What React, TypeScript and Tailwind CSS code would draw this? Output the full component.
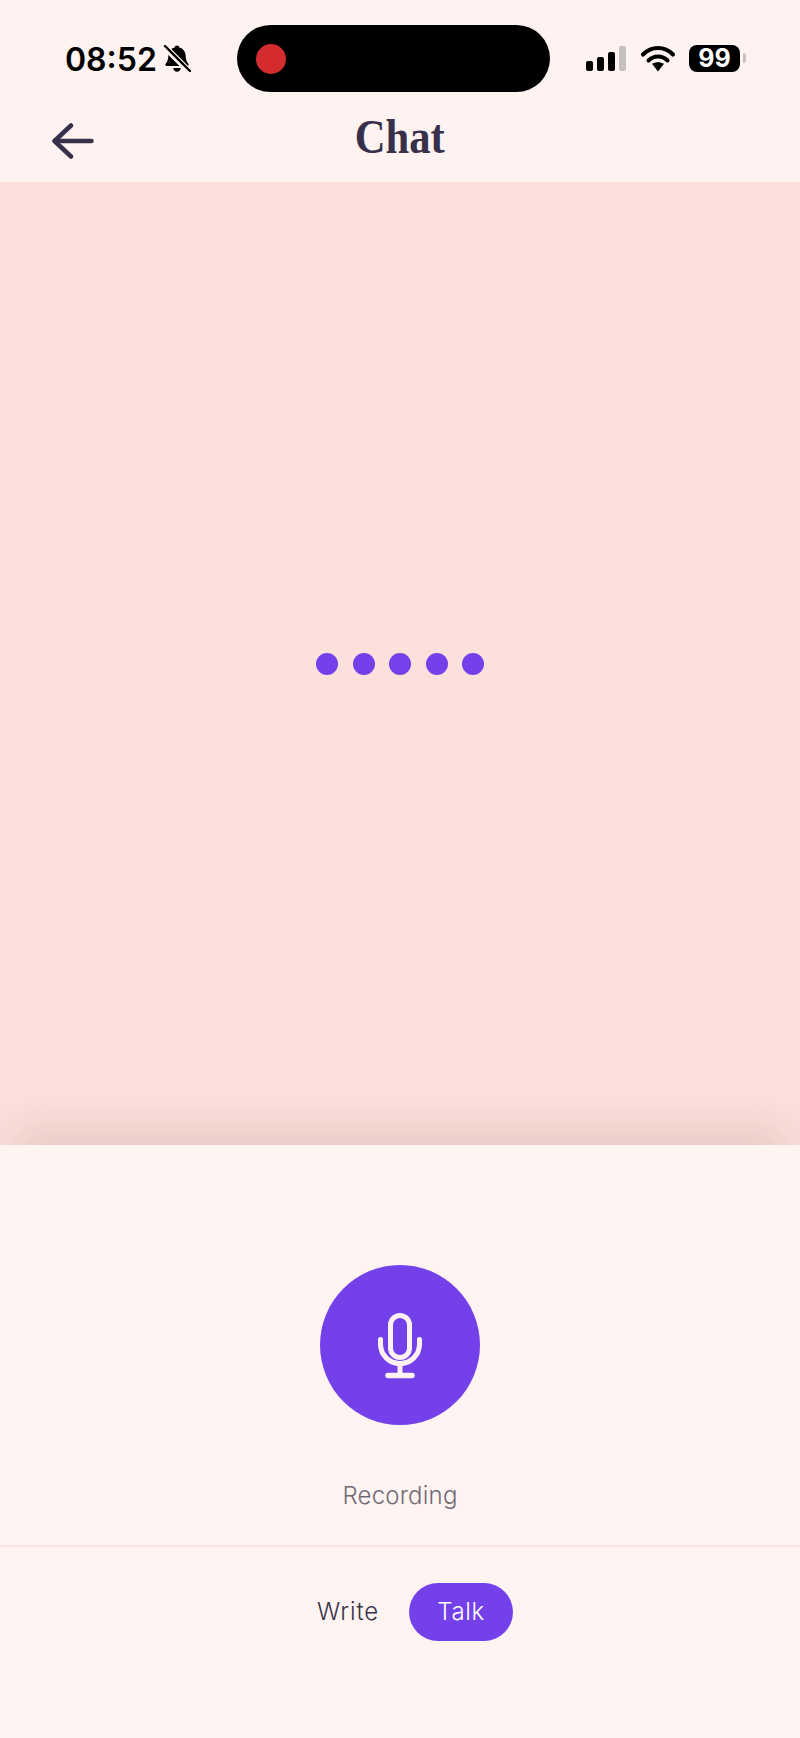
function BellMute() {
  return (
    <svg width="28" height="28" viewBox="0 0 28 28" fill="none" className="-mt-[2px]">
      <path d="M14 .5c1.300 0 2.200.9 2.400 2 3.800 1 6 4 6.200 8 .2 4 1 6.300 2.600 8.100 1 1.100.5 2.400-1 2.400H3.800c-1.500 0-2-1.300-1-2.400C4.400 16.800 5.200 14.500 5.400 10.500c.2-4 2.400-7 6.200-8C11.800 1.400 12.700.5 14 .5z" fill="#000" />
      <path d="M10.200 23h7.600c-.3 2.200-1.800 3.700-3.800 3.700s-3.500-1.500-3.800-3.700z" fill="#000" />
      <path d="M0 2.500 25 27.500" stroke="#fff3f1" strokeWidth="3" />
      <path d="M3 0.500 27.500 25" stroke="#fff3f1" strokeWidth="2.500" />
      <path d="M2 1 27 26" stroke="#000" strokeWidth="2.400" strokeLinecap="round" />
    </svg>
  );
}

function Signal() {
  return (
    <div className="flex items-end gap-[4px] h-[25px] mt-[21px]">
      <div className="w-[7px] h-[10px] rounded-[2px] bg-black" />
      <div className="w-[7px] h-[14px] rounded-[2px] bg-black" />
      <div className="w-[7px] h-[19px] rounded-[2px] bg-black" />
      <div className="w-[7px] h-[25px] rounded-[2px] bg-[#c6c1c0]" />
    </div>
  );
}

function Wifi() {
  return (
    <svg width="36" height="27" viewBox="0 0 36 27" className="mt-[20px] ml-[14px]" fill="none">
      <path d="M3 9.500C7 5.400 12.200 3 18 3s11 2.400 15 6.500" stroke="#000" strokeWidth="4.200" strokeLinecap="round" />
      <path d="M8.500 15.500c2.500-2.500 5.800-4 9.500-4s7 1.500 9.500 4" stroke="#000" strokeWidth="4" strokeLinecap="round" />
      <path d="M12 18.800c1.700-1 3.800-1.600 6-1.600s4.300.6 6 1.600L18 26.500z" fill="#000" />
    </svg>
  );
}

function Mic() {
  return (
    <svg width="46" height="67" viewBox="0 0 46 67" fill="none" stroke="#fff3f1" strokeWidth="5" strokeLinecap="round">
      <rect x="13.500" y="3.500" width="19" height="42" rx="9.500" />
      <path d="M3.500 27.500V32c0 11 8.700 19.500 19.500 19.500S42.500 43 42.500 32v-4.500" />
      <path d="M23 52v11" />
      <path d="M11 63.500h24" strokeWidth="5.500" />
    </svg>
  );
}

export default function App() {
  return (
    <div className="w-[800px] h-[1738px] flex flex-col bg-[#fff3f1] font-['Inter',sans-serif] overflow-hidden">
      <header className="h-[182px] shrink-0 flex flex-col">
        <div className="h-[100px] flex items-start">
          <div className="w-[237px] pl-[65px] pt-[42px] flex items-center gap-[6px]">
            <span className="text-[32px] leading-[36px] font-semibold text-black">08:52</span>
            <BellMute />
          </div>
          <div className="w-[313px] h-[67px] mt-[25px] bg-black rounded-[34px] flex items-center pl-[19px]">
            <div className="w-[30px] h-[30px] rounded-full bg-[#d42b2f]" />
          </div>
          <div className="flex-1 pl-[36px] pt-[25px] flex items-start">
            <Signal />
            <Wifi />
            <div className="mt-[20px] ml-[13px] w-[51px] h-[27px] rounded-[8px] bg-black flex items-center justify-center text-white text-[25px] leading-none font-bold">99</div>
            <div className="mt-[28px] ml-[3px] w-[3px] h-[10px] rounded-r-[3px] bg-[#c6c1c0]" />
          </div>
        </div>
        <div className="h-[82px] grid grid-cols-[1fr_auto_1fr] items-center pb-[8px]">
          <div className="pl-[52px] pt-[8px]">
            <svg width="42" height="36" viewBox="0 0 42 36" fill="none" stroke="#37304a" strokeWidth="4.500" strokeLinecap="round" strokeLinejoin="round">
              <path d="M39.500 18H3" />
              <path d="M19 2.500 2.500 18 19 33.500" />
            </svg>
          </div>
          <h1 className="font-['Liberation_Serif',serif] font-bold text-[49px] leading-[56px] text-[#37304a] scale-x-[0.87]">Chat</h1>
          <div />
        </div>
      </header>

      <main className="flex-1 bg-[#fce0db] flex items-center justify-center gap-[14.500px]">
        <div className="w-[22px] h-[22px] rounded-full bg-[#7340ea]" />
        <div className="w-[22px] h-[22px] rounded-full bg-[#7340ea]" />
        <div className="w-[22px] h-[22px] rounded-full bg-[#7340ea]" />
        <div className="w-[22px] h-[22px] rounded-full bg-[#7340ea]" />
        <div className="w-[22px] h-[22px] rounded-full bg-[#7340ea]" />
      </main>

      <section className="relative h-[593px] shrink-0 bg-[#fff4f1] flex flex-col shadow-[0_-30px_36px_-12px_rgba(90,40,40,0.11)]">
        <div className="h-[402px] flex flex-col items-center pt-[120px] border-b-2 border-[#fde3e0]">
          <button className="w-[160px] h-[160px] rounded-full bg-[#7340ea] flex items-center justify-center">
            <Mic />
          </button>
          <p className="mt-[55px] text-[24px] leading-[32px] text-[#6f6a76] font-light tracking-[0.2px]">Recording</p>
        </div>
        <div className="flex justify-center items-center pt-[36px]">
          <span className="w-[122px] text-center text-[24px] leading-[32px] text-[#37334a] font-light tracking-[0.9px]">Write</span>
          <span className="w-[104px] h-[58px] rounded-[29px] bg-[#7340ea] text-white flex items-center justify-center text-[24px] font-light tracking-[0.6px]">Talk</span>
        </div>
      </section>
    </div>
  );
}
